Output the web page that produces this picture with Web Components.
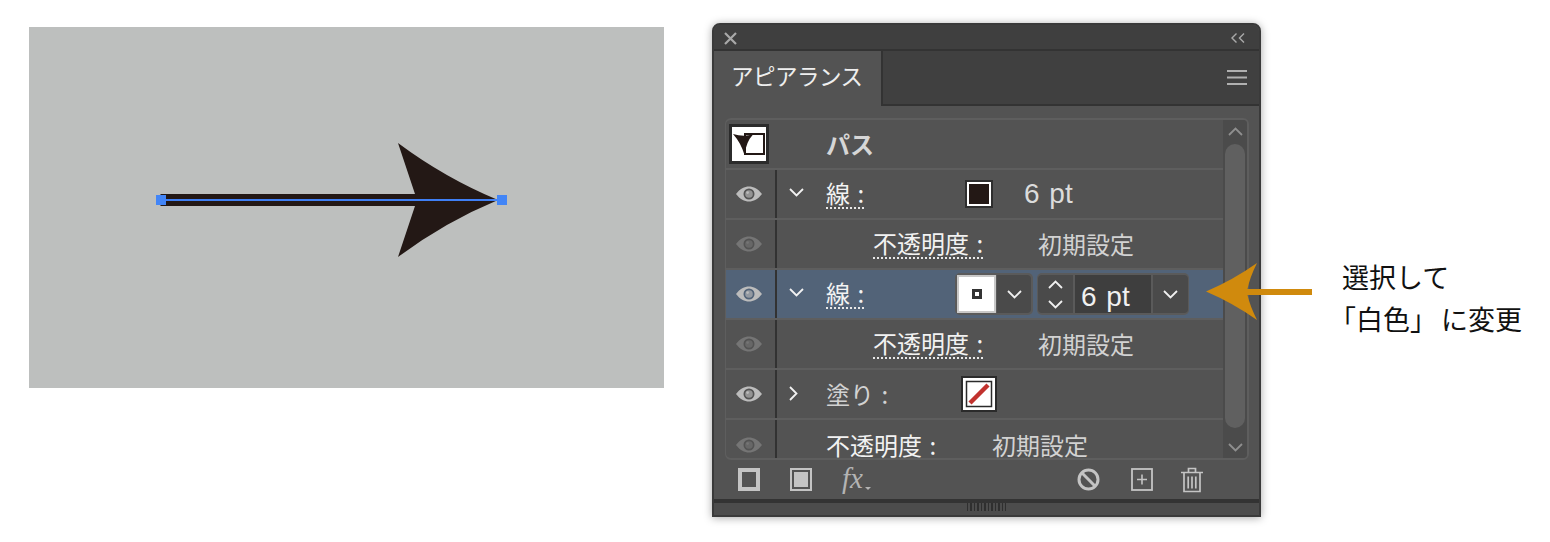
<!DOCTYPE html>
<html lang="ja">
<head>
<meta charset="utf-8">
<title>アピアランス</title>
<style>
  html, body { margin: 0; background: #fff; }
  body { font-family: "Noto Sans CJK JP", "Liberation Sans", sans-serif; }
</style>
</head>
<body>
<demo-stage>
  <art-canvas></art-canvas>
  <appearance-panel>
    <appearance-row head>
      <path-thumb slot="eye"></path-thumb>
      <span slot="label" class="bold">パス</span>
    </appearance-row>
    <appearance-row eye="on" chev="down" label="138">
      <dotted-label slot="label">線 :</dotted-label>
      <stroke-swatch slot="value"></stroke-swatch>
      <span slot="value" class="pt">6 pt</span>
    </appearance-row>
    <appearance-row eye="off" indent="98" label="165">
      <dotted-label slot="label">不透明度 :</dotted-label>
      <span slot="value" class="dim">初期設定</span>
    </appearance-row>
    <appearance-row eye="on" chev="down" label="129" selected>
      <dotted-label slot="label">線 :</dotted-label>
      <stroke-picker slot="value"></stroke-picker>
      <weight-stepper slot="value" value="6 pt"></weight-stepper>
    </appearance-row>
    <appearance-row eye="off" indent="98" label="165">
      <dotted-label slot="label">不透明度 :</dotted-label>
      <span slot="value" class="dim">初期設定</span>
    </appearance-row>
    <appearance-row eye="on" chev="right" label="135">
      <span slot="label" class="dim">塗り :</span>
      <none-swatch slot="value"></none-swatch>
    </appearance-row>
    <appearance-row eye="off" indent="51" label="166" last>
      <span slot="label">不透明度 :</span>
      <span slot="value" class="dim">初期設定</span>
    </appearance-row>
  </appearance-panel>
  <callout-note>選択して<br><span class="open">「</span>白色<span class="close">」</span>に変更</callout-note>
</demo-stage>

<script>
  // Helper: every element below just sets its shadow markup once
  class ShadowBase extends HTMLElement {
    constructor() {
      super();
      this.attachShadow({ mode: 'open' });
    }
  }

  const ICONS = {
    close: '<svg width="13" height="13" viewBox="0 0 13 13"><path d="M1 1l11 11M12 1L1 12" stroke="currentColor" stroke-width="2.200" fill="none"/></svg>',
    collapse: '<svg width="14" height="10" viewBox="0 0 14 10"><path d="M5.500 .6L1 5l4.500 4.400M13 .6L8.500 5 13 9.400" stroke="currentColor" stroke-width="1.400" fill="none"/></svg>',
    menu: '<svg width="20" height="15" viewBox="0 0 20 15"><path d="M0 1h20M0 7.500h20M0 14h20" stroke="currentColor" stroke-width="2" fill="none"/></svg>',
    eye: '<svg width="26" height="16" viewBox="0 0 26 16"><path fill-rule="evenodd" fill="currentColor" d="M0 8C4 2.600 8.500 .5 13 .5S22 2.600 26 8c-4 5.400-8.500 7.500-13 7.500S4 13.400 0 8zM13 2.500a5.500 5.500 0 1 0 0 11 5.500 5.500 0 0 0 0-11z"/><circle cx="13" cy="8" r="3.800" fill="currentColor" opacity=".62"/><circle cx="11.600" cy="6.600" r="1.300" fill="currentColor"/></svg>',
    down: '<svg width="15" height="9" viewBox="0 0 15 9"><path d="M1 1l6.500 6.500L14 1" stroke="currentColor" stroke-width="1.800" fill="none"/></svg>',
    up: '<svg width="15" height="9" viewBox="0 0 15 9"><path d="M1 8l6.500-6.500L14 8" stroke="currentColor" stroke-width="1.800" fill="none"/></svg>',
    right: '<svg width="9" height="15" viewBox="0 0 9 15"><path d="M1 1l6.500 6.500L1 14" stroke="currentColor" stroke-width="1.800" fill="none"/></svg>',
    stroke: '<svg width="22" height="23" viewBox="0 0 22 23"><path fill-rule="evenodd" fill="currentColor" d="M0 0h22v23H0zM4 4v15h14V4z"/></svg>',
    fill: '<svg width="22" height="23" viewBox="0 0 22 23"><rect x="1" y="1" width="20" height="21" fill="none" stroke="currentColor" stroke-width="2"/><rect x="4" y="4" width="14" height="15" fill="currentColor"/></svg>',
    clear: '<svg width="23" height="23" viewBox="0 0 23 23"><circle cx="11.500" cy="11.500" r="9.500" fill="none" stroke="currentColor" stroke-width="3"/><path d="M4.800 4.800l13.400 13.400" stroke="currentColor" stroke-width="3"/></svg>',
    add: '<svg width="22" height="23" viewBox="0 0 22 23"><rect x="1" y="1" width="20" height="21" fill="none" stroke="currentColor" stroke-width="1.800"/><path d="M11 6.500v10M6 11.500h10" stroke="currentColor" stroke-width="1.600"/></svg>',
    trash: '<svg width="22" height="26" viewBox="0 0 22 26"><path d="M0 5.500h22M7.500 5V1.500h7V5M3 6v18.500h16V6M7.200 9.500v12M11 9.500v12M14.800 9.500v12" stroke="currentColor" stroke-width="1.700" fill="none"/></svg>'
  };

  class UiIcon extends ShadowBase {
    connectedCallback() {
      this.shadowRoot.innerHTML = `
        <style>:host { display: inline-flex; line-height: 0; }</style>
        ${ICONS[this.getAttribute('name')]}`;
    }
  }

  // Whole page row: artboard, panel and note side by side
  class DemoStage extends ShadowBase {
    connectedCallback() {
      this.shadowRoot.innerHTML = `
        <style>
          :host { display: flex; align-items: flex-start; height: 542px; width: 1550px; overflow: hidden; }
        </style>
        <slot></slot>`;
    }
  }

  class ArtCanvas extends ShadowBase {
    connectedCallback() {
      this.shadowRoot.innerHTML = `
        <style>
          :host { display: block; flex: none; width: 635px; height: 361px; margin: 27px 48px 0 29px; background: #bdbfbe; }
          svg { display: block; }
        </style>
        <svg width="635" height="361" viewBox="29 27 635 361">
          <rect x="160.500" y="194" width="260" height="12" fill="#231815"/>
          <path fill="#231815" d="M398 143Q445 178 498 200Q445 222 398 257L417 200Z"/>
          <rect x="161" y="199" width="341" height="2" fill="#3f7ff5"/>
          <rect x="156" y="195" width="10" height="10" fill="#4285f7"/>
          <rect x="497" y="195" width="10" height="10" fill="#4285f7"/>
        </svg>`;
    }
  }

  class AppearancePanel extends ShadowBase {
    connectedCallback() {
      this.shadowRoot.innerHTML = `
        <style>
          :host {
            display: flex; flex-direction: column; flex: none; box-sizing: border-box;
            width: 549px; height: 494px; margin-top: 23px;
            background: #535353; border: 2px solid #3a3a3a; border-bottom-width: 2px;
            border-radius: 8px 8px 0 0; color: #f2f2f2;
            box-shadow: 0 1px 8px rgba(0,0,0,.35);
            font: 24px/1 "Noto Sans CJK JP", "Liberation Sans", sans-serif;
            word-spacing: 2px;
          }
          .title {
            flex: none; background: #3f3f3f; border-bottom: 2px solid #333;
            border-radius: 6px 6px 0 0; display: flex; align-items: center; justify-content: space-between;
            padding: 2px 14px 0 10px; height: 22px; color: #a9a9a9;
          }
          .tabs { height: 55px; flex: none; display: flex; background: #404040; }
          .tab {
            background: #535353; border-right: 2px solid #333;
            font-size: 22.500px; color: #eee; display: flex; align-items: center; padding-left: 17px;
            box-sizing: border-box; width: 169px; padding-bottom: 7px; letter-spacing: -.5px;
          }
          .tabfill {
            flex: 1; border-bottom: 2px solid #333; display: flex; align-items: center;
            justify-content: flex-end; padding: 0 12px 0 0; color: #b0b0b0;
          }
          .body { flex: 1; display: flex; flex-direction: column; padding: 12px 10px 0 11px; min-height: 0; }
          .list {
            height: 342px; flex: none; box-sizing: border-box; display: flex; overflow: hidden;
            border: 2px solid #5e5e5e; border-left-width: 1px; border-radius: 6px;
          }
          .rows { width: 497px; flex: none; overflow: hidden; }
          .scroll {
            flex: 1; background: #4b4b4b; display: flex; flex-direction: column; align-items: center;
            justify-content: space-between; padding: 7px 0 6px; box-sizing: border-box; color: #8f8f8f;
          }
          .thumb { flex: 1; width: 20px; margin: 8px 0 15px; background: #606060; border-radius: 10px; }
          .tools {
            height: 39px; flex: none; display: flex; align-items: center; color: #c4c4c4;
            padding: 0 46px 0 13px;
          }
          .tools ui-icon { margin-right: 30px; }
          .fx {
            font: italic 29px/1 "Liberation Serif", serif; color: #b4b4b4; position: relative;
            width: 29px; margin-top: -3px;
          }
          .fx i {
            position: absolute; right: 0; bottom: 3px; width: 0; height: 0;
            border: 3px solid transparent; border-top: 3px solid #b4b4b4; border-bottom: 0;
          }
          .right { margin-left: auto; display: flex; align-items: center; }
          .right ui-icon { margin: 0; }
          .right ui-icon[name="add"] { margin: 0 28px 0 31px; }
          .foot {
            height: 12px; flex: none; border-top: 4px solid #333; background: #4c4c4c;
            display: flex; justify-content: center;
          }
          .grip {
            width: 39px; height: 8px;
            background: repeating-linear-gradient(90deg, #2f2f2f 0 1.500px, transparent 1.500px 3.500px);
          }
        </style>
        <div class="title"><ui-icon name="close"></ui-icon><ui-icon name="collapse"></ui-icon></div>
        <div class="tabs">
          <div class="tab">アピアランス</div>
          <div class="tabfill"><ui-icon name="menu"></ui-icon></div>
        </div>
        <div class="body">
          <div class="list">
            <div class="rows"><slot></slot></div>
            <div class="scroll">
              <ui-icon name="up"></ui-icon>
              <div class="thumb"></div>
              <ui-icon name="down"></ui-icon>
            </div>
          </div>
          <div class="tools">
            <ui-icon name="stroke"></ui-icon>
            <ui-icon name="fill"></ui-icon>
            <span class="fx">fx<i></i></span>
            <div class="right">
              <ui-icon name="clear"></ui-icon>
              <ui-icon name="add"></ui-icon>
              <ui-icon name="trash"></ui-icon>
            </div>
          </div>
        </div>
        <div class="foot"><div class="grip"></div></div>`;
    }
  }

  class AppearanceRow extends ShadowBase {
    connectedCallback() {
      const eye = this.getAttribute('eye');
      const chev = this.getAttribute('chev');
      const indent = this.getAttribute('indent') || 51;
      const label = this.getAttribute('label') || 138;
      const eyeMarkup = eye ? `<ui-icon name="eye" class="${eye}"></ui-icon>` : '<slot name="eye"></slot>';
      const chevMarkup = chev ? `<ui-icon name="${chev}" class="chev ${chev}"></ui-icon>` : '';
      this.shadowRoot.innerHTML = `
        <style>
          :host {
            display: flex; height: 50px; box-sizing: border-box;
            border-bottom: 2px solid #5e5e5e; align-items: stretch;
          }
          :host([last]) { border-bottom: 0; height: 38px; }
          :host([selected]) { background: #526378; }
          .eye {
            width: 49px; height: 48px; flex: none; display: flex; align-items: center; justify-content: center;
            padding-right: 3px; box-sizing: border-box;
          }
          .eye .on { color: #bcbcbc; }
          .eye .off { color: #757575; }
          .rest { flex: 1; display: flex; align-items: center; position: relative; border-left: 2px solid #323232; }
          :host([head]) .rest { border-left-color: transparent; }
          :host([last]) .rest { height: 50px; }
          :host([last]) .eye { height: 50px; }
          .chev { position: absolute; color: #f2f2f2; }
          .chev.down { left: 12px; top: 18px; }
          .chev.right { left: 12px; top: 16px; }
          .label { flex: none; white-space: nowrap; }
          .value { display: flex; align-items: center; }
          ::slotted(.bold) { font-weight: 700; color: #d6d6d6; }
          ::slotted(.dim) { color: #d2d2d2; }
          ::slotted(.pt) {
            font: 28px/1 "Liberation Sans", sans-serif; color: #dcdcdc; margin-left: 33px; word-spacing: 2px;
          }
        </style>
        <div class="eye">${eyeMarkup}</div>
        <div class="rest">
          ${chevMarkup}
          <div class="label" style="margin-left:${indent - 2}px;width:${label}px"><slot name="label"></slot></div>
          <div class="value"><slot name="value"></slot></div>
        </div>`;
    }
  }

  class DottedLabel extends ShadowBase {
    connectedCallback() {
      this.shadowRoot.innerHTML = `
        <style>
          :host { display: inline-block; }
          span { display: inline-block; line-height: 28px; border-bottom: 2px dotted #e8e8e8; }
        </style>
        <span><slot></slot></span>`;
    }
  }

  class PathThumb extends ShadowBase {
    connectedCallback() {
      this.shadowRoot.innerHTML = `
        <style>:host { display: block; line-height: 0; }</style>
        <svg width="40" height="40" viewBox="0 0 40 40">
          <rect x="1.500" y="1.500" width="37" height="37" fill="#fff" stroke="#2b2b2b" stroke-width="3"/>
          <rect x="16" y="10" width="19" height="20" fill="#fff" stroke="#231815" stroke-width="2"/>
          <path d="M4 10Q14 13 24 10.500Q17 18 15.500 31Q12 19 4 10Z" fill="#231815"/>
        </svg>`;
    }
  }

  class StrokeSwatch extends ShadowBase {
    connectedCallback() {
      this.shadowRoot.innerHTML = `
        <style>
          :host {
            display: block; box-sizing: border-box; width: 24px; height: 24px;
            background: #231815; border: 2px solid #fff; outline: 2px solid #2e2e2e;
            margin: 2px 0 2px 3px;
          }
        </style>`;
    }
  }

  class NoneSwatch extends ShadowBase {
    connectedCallback() {
      this.shadowRoot.innerHTML = `
        <style>:host { display: block; line-height: 0; }</style>
        <svg width="36" height="36" viewBox="0 0 36 36">
          <rect x="1" y="1" width="34" height="34" fill="#fff" stroke="#2b2b2b" stroke-width="2"/>
          <rect x="5.500" y="5.500" width="25" height="25" fill="#fff" stroke="#2b2b2b" stroke-width="1.500"/>
          <path d="M9 27L27 9" stroke="#c1322e" stroke-width="4.500"/>
        </svg>`;
    }
  }

  class StrokePicker extends ShadowBase {
    connectedCallback() {
      this.shadowRoot.innerHTML = `
        <style>
          :host {
            display: flex; width: 78px; height: 42px; box-sizing: border-box; padding: 2px;
            background: #5a5a5a; border-radius: 5px; gap: 1px;
          }
          .swatch {
            width: 39px; background: #fff; box-sizing: border-box; border: 2px solid #c8c8c8;
            display: flex; align-items: center; justify-content: center;
          }
          .swatch i { display: block; width: 10px; height: 10px; box-sizing: border-box; border: 3px solid #333; }
          .drop {
            flex: 1; background: #4a4a4a; border-radius: 0 4px 4px 0; color: #f0f0f0;
            display: flex; align-items: center; justify-content: center;
          }
        </style>
        <div class="swatch"><i></i></div>
        <div class="drop"><ui-icon name="down"></ui-icon></div>`;
    }
  }

  class WeightStepper extends ShadowBase {
    connectedCallback() {
      this.shadowRoot.innerHTML = `
        <style>
          :host {
            display: flex; width: 152px; height: 42px; box-sizing: border-box; padding: 2px 1px;
            background: #5a5a5a; border-radius: 5px; gap: 2px; margin-left: 4px; color: #f0f0f0;
          }
          .spin {
            width: 35px; background: #4a4a4a; border-radius: 4px 0 0 4px;
            display: flex; flex-direction: column; align-items: center; justify-content: center; gap: 11px;
          }
          .num {
            flex: 1; background: #3e3e3e; display: flex; align-items: center; padding-left: 6px;
            font: 28px/1 "Liberation Sans", sans-serif; word-spacing: 2px; padding-top: 5px; box-sizing: border-box;
          }
          .drop {
            width: 35px; background: #4a4a4a; border-radius: 0 4px 4px 0;
            display: flex; align-items: center; justify-content: center;
          }
        </style>
        <div class="spin"><ui-icon name="up"></ui-icon><ui-icon name="down"></ui-icon></div>
        <div class="num">${this.getAttribute('value')}</div>
        <div class="drop"><ui-icon name="down"></ui-icon></div>`;
    }
  }

  // Note on the right; its arrow lies over the panel
  class CalloutNote extends ShadowBase {
    connectedCallback() {
      this.shadowRoot.innerHTML = `
        <style>
          :host {
            display: block; flex: none; position: relative; margin: 256px 0 0 81px;
            font: 27px/42px "Noto Sans CJK JP", "Liberation Sans", sans-serif; color: #111; white-space: nowrap;
          }
          ::slotted(.open) { margin-left: -13px; }
          ::slotted(.close) { letter-spacing: 4px; }
          svg { position: absolute; left: -136px; top: 7px; }
        </style>
        <svg width="106" height="57" viewBox="1206 263 106 57">
          <path fill="#d08a0d" d="M1206 291.500Q1233 280 1257 263Q1250 277 1247.500 289H1312V295H1247.500Q1250 306 1257 320Q1233 303 1206 291.500Z"/>
        </svg>
        <slot></slot>`;
    }
  }

  customElements.define('ui-icon', UiIcon);
  customElements.define('demo-stage', DemoStage);
  customElements.define('art-canvas', ArtCanvas);
  customElements.define('appearance-panel', AppearancePanel);
  customElements.define('appearance-row', AppearanceRow);
  customElements.define('dotted-label', DottedLabel);
  customElements.define('path-thumb', PathThumb);
  customElements.define('stroke-swatch', StrokeSwatch);
  customElements.define('none-swatch', NoneSwatch);
  customElements.define('stroke-picker', StrokePicker);
  customElements.define('weight-stepper', WeightStepper);
  customElements.define('callout-note', CalloutNote);
</script>
</body>
</html>
